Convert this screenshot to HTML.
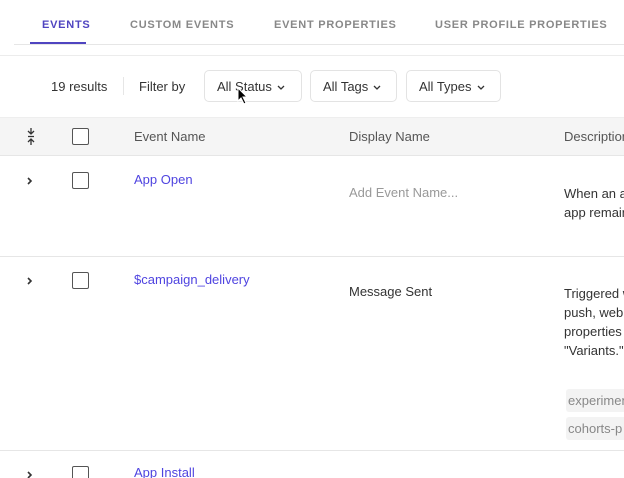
<!DOCTYPE html>
<html><head><style>
*{margin:0;padding:0;box-sizing:border-box}
html,body{width:624px;height:478px;overflow:hidden}
body{background:#fff;font-family:"Liberation Sans",sans-serif;position:relative;color:#333}
.a{position:absolute;white-space:nowrap}
.tab{font-size:11px;font-weight:bold;letter-spacing:0.75px;color:#888;top:19px}
.cb{position:absolute;width:17px;height:17px;border:1px solid #555;border-radius:2px;background:#fff;left:72px}
.btn{position:absolute;top:70px;height:32px;border:1px solid #e3e3e3;border-radius:5px;font-size:13px;color:#333;padding:8px 0 0 12px}
.btn svg{margin-left:5px;vertical-align:middle}
.chev{left:27px}
.link{color:#4f44e0;font-size:13px;left:134px}
.t{font-size:13px}
</style></head><body>
<div class="a tab" style="left:42px;color:#4f44c0">EVENTS</div>
<div class="a tab" style="left:130px">CUSTOM EVENTS</div>
<div class="a tab" style="left:274px">EVENT PROPERTIES</div>
<div class="a tab" style="left:435px">USER PROFILE PROPERTIES</div>
<div class="a" style="left:30px;top:42px;width:56px;height:2px;background:#4f44c0"></div>
<div class="a" style="left:14px;top:44px;width:610px;height:1px;background:#e6e6e6"></div>
<div class="a" style="left:0;top:55px;width:624px;height:1px;background:#ececec"></div>
<div class="a t" style="left:51px;top:79px">19 results</div>
<div class="a" style="left:123px;top:77px;width:1px;height:18px;background:#e6e6e6"></div>
<div class="a t" style="left:139px;top:79px">Filter by</div>
<div class="btn" style="left:204px;width:98px">All Status<svg width="8" height="6"><path d="M1 1L4 4L7 1" stroke="#333" stroke-width="1.3" fill="none"/></svg></div>
<div class="btn" style="left:310px;width:87px">All Tags<svg width="8" height="6"><path d="M1 1L4 4L7 1" stroke="#333" stroke-width="1.3" fill="none"/></svg></div>
<div class="btn" style="left:406px;width:95px">All Types<svg width="8" height="6"><path d="M1 1L4 4L7 1" stroke="#333" stroke-width="1.3" fill="none"/></svg></div>
<svg class="a" style="left:237px;top:87px" width="12" height="18"><path d="M1 1 L1 14 L4 11 L7 17 L9 16 L6 10 L10 10 Z" fill="#000" stroke="#fff" stroke-width="1"/></svg>
<div class="a" style="left:0;top:117px;width:624px;height:39px;background:#f5f5f5;border-top:1px solid #eee;border-bottom:1px solid #e6e6e6"></div>
<svg class="a" style="left:26px;top:128px" width="10" height="17"><path d="M5 0V6M2 3L5 6L8 3M5 17V11M2 14L5 11L8 14M2 8.5H8" stroke="#333" stroke-width="1.3" fill="none"/></svg>
<div class="cb" style="top:128px"></div>
<div class="a t" style="left:134px;top:129px;color:#555">Event Name</div>
<div class="a t" style="left:349px;top:129px;color:#555">Display Name</div>
<div class="a t" style="left:564px;top:129px;color:#555;width:60px;overflow:hidden">Description</div>
<svg class="a chev" style="top:177px" width="6" height="8"><path d="M1 1L4 4L1 7" stroke="#333" stroke-width="1.6" fill="none"/></svg>
<div class="cb" style="top:172px"></div>
<div class="a link" style="top:172px">App Open</div>
<div class="a t" style="left:349px;top:185px;color:#999">Add Event Name...</div>
<div class="a t" style="left:564px;top:184px;line-height:19px;width:60px;overflow:hidden">When an app<br>app remains</div>
<div class="a" style="left:0;top:256px;width:624px;height:1px;background:#e6e6e6"></div>
<svg class="a chev" style="top:277px" width="6" height="8"><path d="M1 1L4 4L1 7" stroke="#333" stroke-width="1.6" fill="none"/></svg>
<div class="cb" style="top:272px"></div>
<div class="a link" style="top:272px">$campaign_delivery</div>
<div class="a t" style="left:349px;top:284px">Message Sent</div>
<div class="a t" style="left:564px;top:284px;line-height:19px;width:60px;overflow:hidden">Triggered when<br>push, web<br>properties<br>"Variants."</div>
<div class="a t" style="left:566px;top:389px;height:23px;width:58px;overflow:hidden;background:#f3f3f3;border-radius:3px 0 0 3px;padding:4px 2px;color:#888">experiments</div>
<div class="a t" style="left:566px;top:417px;height:23px;width:58px;overflow:hidden;background:#f3f3f3;border-radius:3px 0 0 3px;padding:4px 2px;color:#888">cohorts-p</div>
<div class="a" style="left:0;top:450px;width:624px;height:1px;background:#e6e6e6"></div>
<svg class="a chev" style="top:471px" width="6" height="7"><path d="M1 1L4 4L1 7" stroke="#333" stroke-width="1.6" fill="none"/></svg>
<div class="cb" style="top:466px;height:12px;border-bottom:none;border-radius:2px 2px 0 0"></div>
<div class="a link" style="top:465px">App Install</div>
</body></html>
